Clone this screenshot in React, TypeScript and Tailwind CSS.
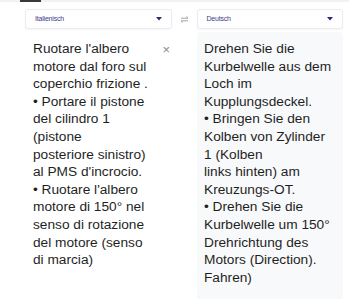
import { useState } from "react";

const left = [
  "Ruotare l'albero",
  "motore dal foro sul",
  "coperchio frizione .",
  "• Portare il pistone",
  "del cilindro 1",
  "(pistone",
  "posteriore sinistro)",
  "al PMS d'incrocio.",
  "• Ruotare l'albero",
  "motore di 150° nel",
  "senso di rotazione",
  "del motore (senso",
  "di marcia)",
];

const right = [
  "Drehen Sie die",
  "Kurbelwelle aus dem",
  "Loch im",
  "Kupplungsdeckel.",
  "• Bringen Sie den",
  "Kolben von Zylinder",
  "1 (Kolben",
  "links hinten) am",
  "Kreuzungs-OT.",
  "• Drehen Sie die",
  "Kurbelwelle um 150°",
  "Drehrichtung des",
  "Motors (Direction).",
  "Fahren)",
];

function LangSelect({ label }: { label: string }) {
  return (
    <div className="flex-1 h-[20px] flex items-center justify-between px-[9px] bg-white border border-[#ececf0] rounded-[3px] shadow-[0_1px_2px_rgba(0,0,0,0.04)]">
      <span className="text-[7px] text-[#3f3a8c] tracking-[-0.2px]">{label}</span>
      <svg width="6" height="4" viewBox="0 0 6 4">
        <path d="M0 0h6L3 3.5z" fill="#2d2a6e" />
      </svg>
    </div>
  );
}

export default function App() {
  const [src] = useState("Italienisch");

  return (
    <div className="w-[349px] h-[300px] bg-white overflow-hidden font-['Liberation_Sans',Arial,sans-serif]">
      {/* Tabs */}
      <div className="h-[2px] bg-[#f1f1f3] flex">
        <div className="ml-[20px] w-[21px] bg-[#3a3a3a]" />
      </div>

      {/* Sprachauswahl */}
      <div className="flex items-center pl-[25px] pr-[6px] mt-[7px]">
        <LangSelect label={src} />
        <div className="w-[25px] flex justify-center text-[#9a9aa0]">
          <svg width="9" height="7" viewBox="0 0 9 7" fill="none" stroke="currentColor" strokeWidth="0.9">
            <path d="M1 2.2h7M6.2 0.6 8 2.2" />
            <path d="M8 4.8H1M2.8 6.4 1 4.8" />
          </svg>
        </div>
        <LangSelect label="Deutsch" />
      </div>

      {/* Texte */}
      <div className="flex pl-[25px] pr-[6px] mt-[3px]">
        <div className="flex-1 flex pl-[8px] pt-[8px] text-[13.7px] leading-[17.6px] text-[#1f1f1f]">
          <p className="flex-1">
            {left.map((l, i) => (
              <span key={i} className="block whitespace-nowrap">
                {l}
              </span>
            ))}
          </p>
          <span className="text-[#8a8a8a] text-[13px] leading-none mt-[3px] mr-[2px]">×</span>
        </div>
        <div className="w-[25px]" />
        <div className="flex-1 h-[267px] bg-[#f8f9fa] rounded-t-[4px] pl-[7px] pt-[8px] text-[13.7px] leading-[17.6px] text-[#1f1f1f]">
          {right.map((l, i) => (
            <span key={i} className="block whitespace-nowrap">
              {l}
            </span>
          ))}
        </div>
      </div>
    </div>
  );
}
